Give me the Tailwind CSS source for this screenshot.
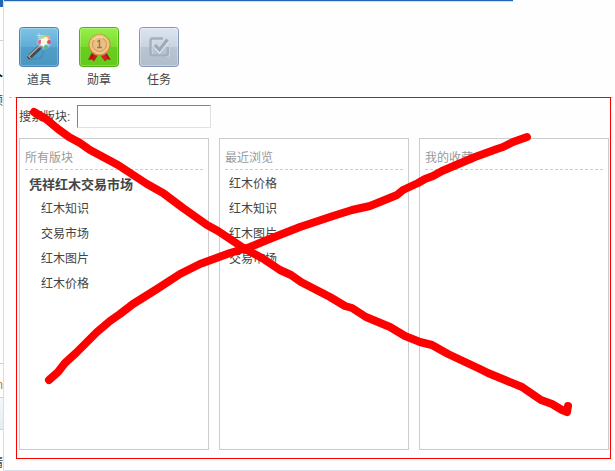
<!DOCTYPE html>
<html lang="zh-CN">
<head>
  <meta charset="UTF-8">
  <meta name="viewport" content="width=device-width, initial-scale=1.0">
  <title>搜索版块</title>
  <script src="https://cdn.jsdelivr.net/npm/@tailwindcss/browser@4"></script>
</head>
<body class="flex min-h-screen bg-white font-['Liberation_Sans','Noto_Sans_CJK_SC',sans-serif] text-xs text-[#444]">

  <!-- Página de fundo -->
  <aside class="flex w-[3px] shrink-0 flex-col overflow-hidden leading-4">
    <div class="h-[7px] bg-[#2366b5]"></div>
    <div class="h-[34px] border-b border-[#cdd3dc]"></div>
    <div class="flex h-[323px] flex-col items-end border-b border-[#cdcdcd] pt-6">
      <b class="text-black">人</b>
      <span class="pt-3">顾</span>
    </div>
    <div class="flex h-[34px] items-end justify-end border-b border-[#c2d5e3] pb-1 text-[#c07a30]">m</div>
    <div class="h-8 border-b border-[#c2d5e3] bg-linear-to-b from-[#f4f8fb] to-[#e5edf2]"></div>
    <div class="flex h-[41px] items-end justify-end">精</div>
  </aside>

  <main class="flex min-w-0 flex-1 flex-col border-b border-l border-[#d6dfe8] bg-[#fefefe]">
    <div class="h-0.5 w-5/6 border-b border-[#cfdff0] bg-[#2366b5]"></div>

    <!-- Atalhos -->
    <nav class="flex gap-5 pt-[25px] pb-2 pl-[15px]">
      <a href="#" class="flex w-10 flex-col items-center gap-1 leading-[18px]">
        <svg class="size-10" viewBox="0 0 40 40">
          <defs>
            <linearGradient id="blue" x2="0" y2="1"><stop stop-color="#7fc4e6"/><stop offset=".5" stop-color="#60acd5"/><stop offset=".5" stop-color="#519fca"/><stop offset="1" stop-color="#4a96be"/></linearGradient>
            <linearGradient id="green" x2="0" y2="1"><stop stop-color="#96f04a"/><stop offset=".5" stop-color="#7bdc2c"/><stop offset=".5" stop-color="#68cf1d"/><stop offset="1" stop-color="#64c91b"/></linearGradient>
            <linearGradient id="gray" x2="0" y2="1"><stop stop-color="#dce5f2"/><stop offset=".5" stop-color="#c9d2df"/><stop offset=".5" stop-color="#bac5d2"/><stop offset="1" stop-color="#b1bdcc"/></linearGradient>
            <radialGradient id="glow"><stop stop-color="#fff"/><stop offset=".5" stop-color="#fff" stop-opacity=".6"/><stop offset="1" stop-color="#fff" stop-opacity="0"/></radialGradient>
          </defs>
          <rect x=".5" y=".5" width="39" height="39" rx="3" fill="url(#blue)" stroke="#4a82bd"/>
          <rect x="1.5" y="1.5" width="37" height="37" rx="2" fill="none" stroke="#fff" stroke-opacity=".25"/>
          <path d="M12 32 22 31 25 24" fill="none" stroke="#3b82a8" stroke-width="1.5" opacity=".5"/>
          <path d="M10.500 30 22 19" stroke="#454a4e" stroke-width="4.500" stroke-linecap="round"/>
          <path d="M10 29 21.500 18" stroke="#a8adb0" stroke-width="1.500"/>
          <path d="M9 28.500 12 31.500" stroke="#ddd"/>
          <circle cx="25" cy="15" r="8" fill="url(#glow)"/>
          <circle cx="21" cy="15" r="2" fill="#ee5a86"/>
          <circle cx="24" cy="10" r="2" fill="#b7e25c"/>
          <circle cx="29" cy="10" r="2" fill="#f3a75c"/>
          <circle cx="30" cy="15" r="2" fill="#e64670"/>
          <circle cx="27" cy="20" r="2" fill="#4fbd84"/>
          <circle cx="25" cy="14.500" r="3" fill="#fff"/>
          <path d="M23.500 17 27 12" stroke="#fff7e0" stroke-width="4" stroke-linecap="round"/>
          <path d="M20 6v5M17.500 8.500h5" stroke="#fff" stroke-width=".7" opacity=".7"/>
        </svg>
        道具
      </a>
      <a href="#" class="flex w-10 flex-col items-center gap-1 leading-[18px]">
        <svg class="size-10" viewBox="0 0 40 40">
          <rect x=".5" y=".5" width="39" height="39" rx="3" fill="url(#green)" stroke="#4fb016"/>
          <rect x="1.500" y="1.500" width="37" height="37" rx="2" fill="none" stroke="#fff" stroke-opacity=".25"/>
          <path d="M13 25 9 33l4-.5 2 2 5-8z" fill="#c41c1c"/>
          <path d="M27 25l5 8-4-.5-2 2-6-8z" fill="#d02222"/>
          <path d="M14 27l-2 5M27 27l3 5" stroke="#8d1010"/>
          <circle cx="20.500" cy="18" r="11" fill="#c68a4a"/>
          <circle cx="20.500" cy="17.500" r="10" fill="#f1c583"/>
          <circle cx="20.500" cy="17.500" r="7" fill="#eac184" stroke="#c99458"/>
          <path d="M15 13a7 7 0 0 1 9-2" fill="none" stroke="#fff0c8"/>
          <path d="M18.500 14.500 20.500 13.500v7M18 20.500h5" fill="none" stroke="#a87646" stroke-width="1.500"/>
        </svg>
        勋章
      </a>
      <a href="#" class="flex w-10 flex-col items-center gap-1 leading-[18px]">
        <svg class="size-10" viewBox="0 0 40 40">
          <rect x=".5" y=".5" width="39" height="39" rx="3" fill="url(#gray)" stroke="#8497b9"/>
          <rect x="1.500" y="1.500" width="37" height="37" rx="2" fill="none" stroke="#fff" stroke-opacity=".3"/>
          <path d="M24 12.500H14q-1.500 0-1.500 2v12.500q0 2 2 2h13q2.500 0 2.500-2.500V20" fill="none" stroke="#d6dee8" stroke-width="2"/>
          <path d="M24 11.500H13.500q-2 0-2 2v12.500q0 2.500 2.500 2.500h12.500q2.500 0 2.500-2.500V20" fill="none" stroke="#a3afc0" stroke-width="2.500"/>
          <path d="M16 20l4.500 5L29 14" fill="none" stroke="#dce3ec" stroke-width="3"/>
          <path d="M16 18l4.500 5L28.500 12.500" fill="none" stroke="#9ba8ba" stroke-width="3"/>
        </svg>
        任务
      </a>
    </nav>

    <div class="mx-[5px] mr-0.5 border-t border-dashed border-[#cdcdcd]"></div>

    <!-- Busca de fóruns -->
    <section class="relative -mt-px mr-1 mb-[11px] ml-3 flex flex-1 flex-col border border-[#f00] pt-[7px] pr-px pb-2 pl-0.5">
      <div class="flex items-center">
        <label for="busca" class="w-[58px] shrink-0">搜索版块:</label>
        <input id="busca" type="text" class="h-[23px] w-[134px] border border-t-[#848484] border-r-[#e0e0e0] border-b-[#e0e0e0] border-l-[#848484] bg-white px-1 outline-none">
      </div>

      <div class="mt-2.5 grid flex-1 grid-cols-3 gap-2.5 leading-[25px]">
        <div class="border border-[#cdcdcd] bg-white px-[5px] pt-2">
          <h2 class="border-b border-dashed border-[#cdcdcd] leading-[22px] text-[#999]">所有版块</h2>
          <ul class="pt-0.5 pl-1">
            <li class="text-[13px] font-bold"><a href="#">凭祥红木交易市场</a></li>
            <li class="pl-3"><a href="#">红木知识</a></li>
            <li class="pl-3"><a href="#">交易市场</a></li>
            <li class="pl-3"><a href="#">红木图片</a></li>
            <li class="pl-3"><a href="#">红木价格</a></li>
          </ul>
        </div>
        <div class="border border-[#cdcdcd] bg-white px-[5px] pt-2">
          <h2 class="border-b border-dashed border-[#cdcdcd] leading-[22px] text-[#999]">最近浏览</h2>
          <ul class="pt-0.5 pl-1">
            <li><a href="#">红木价格</a></li>
            <li><a href="#">红木知识</a></li>
            <li><a href="#">红木图片</a></li>
            <li><a href="#">交易市场</a></li>
          </ul>
        </div>
        <div class="border border-[#cdcdcd] bg-white px-[5px] pt-2">
          <h2 class="border-b border-dashed border-[#cdcdcd] leading-[22px] text-[#999]">我的收藏</h2>
        </div>
      </div>

      <!-- Riscos vermelhos por cima -->
      <svg class="pointer-events-none absolute inset-0 size-full" viewBox="17 98 593 360" preserveAspectRatio="none" fill="none" stroke="#f00" stroke-width="8" stroke-linecap="round" stroke-linejoin="round">
        <path d="M34 112 46 119 58 129 69 137 80 143 90 150 118 165 147 184 163 193 183 208 207 225 218 231 245 249 262 258 280 270 291 275 301 282 330 297 345 306 352 308 366 317 390 327 405 336 420 342 432 345 448 354 480 369 488 373 505 380 522 387 541 400 552 404 562 410 567 412 568 406"/>
        <path d="M49 380 58 372 65 363 76 353 88 341 97 332 110 321 120 314 133 304 157 289 180 274 200 264 230 253 250 247 272 238 300 227 333 216 352 210 370 206 397 195 403 190 418 183 425 179 433 176 442 171 475 157 497 149 503 147 513 142 527 137"/>
      </svg>
    </section>
  </main>
</body>
</html>
